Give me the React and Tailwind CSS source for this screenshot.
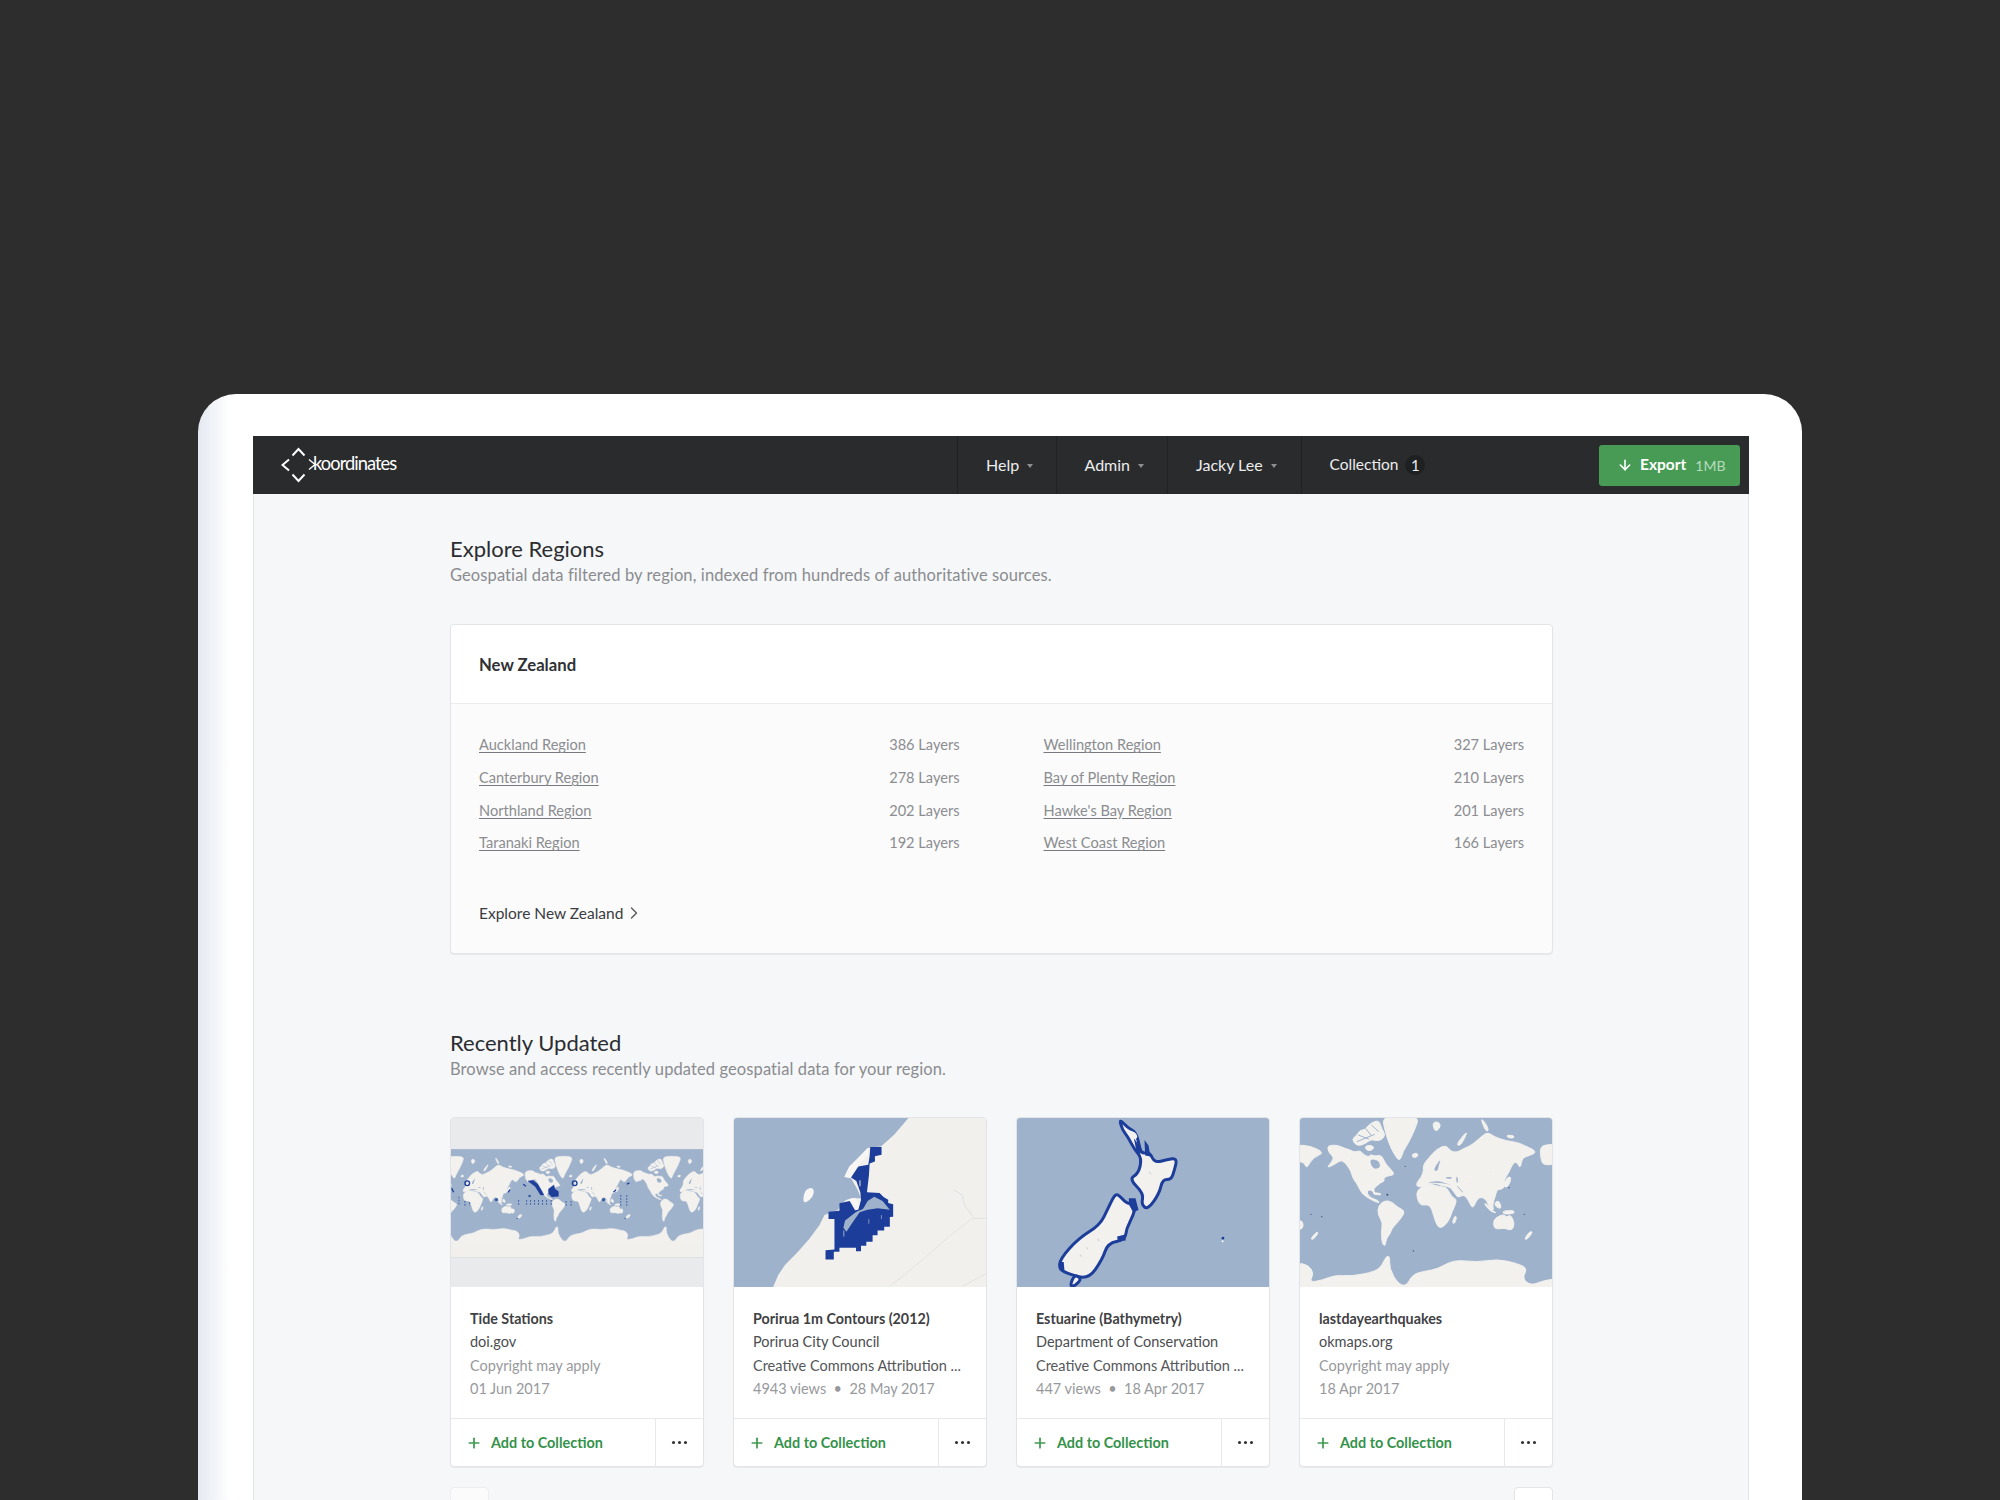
import React from "react";
import { ArrowDown, ChevronRight, Plus } from "lucide-react";

const SEA = "#9fb2cb";
const LAND = "#f2f1ee";
const DEEP = "#1c3d99";

function smooth(pts) {
  const n = pts.length;
  const mid = (a, b) => [(a[0] + b[0]) / 2, (a[1] + b[1]) / 2];
  const s = mid(pts[n - 1], pts[0]);
  let d = `M${s[0]} ${s[1]}`;
  for (let i = 0; i < n; i++) {
    const m = mid(pts[i], pts[(i + 1) % n]);
    d += ` Q${pts[i][0]} ${pts[i][1]} ${m[0]} ${m[1]}`;
  }
  return d + "Z";
}

const WORLD = [
  [[106,94],[122,90],[140,92],[160,100],[178,106],[190,112],[205,106],[218,120],[232,126],[238,118],[250,124],[268,120],[276,132],[284,148],[296,160],[310,178],[296,182],[284,184],[276,192],[280,198],[266,204],[258,212],[246,220],[250,238],[242,226],[230,224],[226,236],[240,250],[256,254],[266,264],[252,260],[232,250],[214,238],[204,222],[196,206],[184,190],[178,168],[166,150],[150,134],[132,146],[104,160],[122,138],[126,126],[112,114]],
  [[260,276],[272,262],[288,256],[306,264],[318,276],[342,288],[332,306],[316,326],[302,340],[296,358],[284,372],[282,394],[272,386],[270,350],[274,322],[260,300]],
  [[272,6],[330,2],[384,6],[372,42],[352,84],[336,108],[326,140],[310,120],[294,88],[282,50]],
  [[180,72],[196,62],[204,46],[222,44],[232,28],[262,14],[270,40],[284,62],[262,80],[240,72],[222,86],[196,94]],
  [[218,94],[240,90],[250,100],[230,110]],
  [[362,118],[378,113],[382,124],[366,129]],
  [[424,22],[444,20],[450,36],[432,52]],
  [[522,56],[530,52],[510,92],[496,90]],
  [[570,10],[582,20],[596,46],[586,50]],
  [[648,60],[672,62],[670,70],[652,68]],
  [[398,168],[396,150],[414,128],[438,102],[466,90],[480,110],[500,112],[520,100],[540,92],[560,76],[590,50],[612,66],[650,78],[680,82],[700,90],[742,110],[718,122],[696,128],[690,162],[680,140],[668,144],[656,172],[640,196],[644,214],[632,224],[620,222],[614,246],[606,268],[610,288],[596,278],[590,258],[576,246],[560,250],[546,284],[532,252],[518,238],[500,250],[488,228],[472,214],[450,212],[438,205],[418,204],[398,214],[378,216],[376,204],[390,188]],
  [[374,234],[392,214],[420,206],[446,216],[468,216],[482,246],[500,254],[484,290],[472,322],[448,342],[434,324],[422,278],[410,268],[386,272]],
  [[608,316],[624,304],[640,298],[650,308],[660,298],[674,326],[664,348],[642,338],[612,344]],
  [[10,442],[50,450],[66,476],[52,502],[90,496],[130,480],[180,484],[250,470],[272,452],[284,424],[296,424],[294,460],[320,506],[346,514],[364,478],[404,468],[440,462],[490,434],[560,442],[620,432],[680,445],[712,460],[696,490],[722,512],[762,496],[810,490],[810,570],[10,570]],
  [[10,88],[60,94],[98,114],[62,128],[44,162],[36,140],[10,140]],
  [[750,96],[772,88],[810,90],[810,145],[760,152],[752,130]],
  [[56,372],[74,350],[80,354],[64,374]],
  [[702,372],[720,348],[728,352],[710,374]],
  [[484,324],[492,302],[498,306],[492,326]],
  [[638,214],[652,184],[664,188],[652,218]],
  [[10,318],[32,316],[34,342],[10,344]],
  [[578,262],[594,272],[606,288],[620,294],[600,290]],
  [[612,262],[626,256],[634,282],[616,276]],
  [[636,288],[672,286],[672,296],[640,298]],
  [[244,232],[270,236],[268,240],[246,238]],
];

const SEAS = [
  [[236,132],[262,136],[268,156],[250,164],[238,150]],
  [[404,204],[440,197],[462,204],[486,212],[470,207],[440,203]],
  [[428,166],[437,148],[450,132],[444,150],[440,170]],
  [[464,186],[484,186],[482,192],[466,191]],
  [[496,184],[501,186],[502,204],[497,204]],
];

function WorldShapes({ seas }) {
  return (
    <g>
      <g fill={LAND} stroke={LAND} strokeWidth="3" strokeLinejoin="round">
        {WORLD.map((p, i) => <path key={i} d={smooth(p)} />)}
      </g>
      {seas && (
        <g>
          <g fill={SEA}>
            {SEAS.map((p, i) => <path key={i} d={smooth(p)} />)}
          </g>
          <g fill="none" stroke={SEA} strokeWidth="3">
            <path d="M200 60 L232 72 M222 40 L240 62 M240 30 L262 50 M196 80 L250 58" />
            <path d="M476 218 L500 250" />
            <path d="M500 214 L516 232" />
            <path d="M410 172 L420 198" strokeWidth="0" />
          </g>
          <g fill="#e4e5e6">
            <circle cx="180" cy="132" r="2" /><circle cx="240" cy="182" r="2" /><circle cx="540" cy="205" r="2" /><circle cx="600" cy="160" r="2" />
          </g>
        </g>
      )}
    </g>
  );
}

function TideMap() {
  return (
    <svg viewBox="18 10 760 505" className="block w-full h-full blur-[0.4px]" preserveAspectRatio="none">
      <rect x="18" y="10" width="760" height="505" fill="#e9eaec" />
      <clipPath id="band"><rect x="18" y="103" width="760" height="324" /></clipPath>
      <g clipPath="url(#band)">
        <rect x="18" y="103" width="760" height="324" fill={SEA} />
        {[-134, 193, 520].map((x) => (
          <g key={x} transform={`translate(${x} 123) scale(0.5)`}><WorldShapes seas /></g>
        ))}
        <rect x="18" y="378" width="760" height="49" fill="#f2f0ec" />
      </g>
      <g fill={DEEP} stroke={DEEP}>
        <path d="M250 198 L265 196 L280 208 L292 228 L298 240 L288 240 L272 215 Z" />
        <path d="M312 222 L328 210 L332 222 L342 230 L342 244 L322 246 L312 236 Z" />
        <circle cx="67" cy="205" r="7" fill="none" strokeWidth="4" />
        <circle cx="391" cy="205" r="7" fill="none" strokeWidth="4" />
        <path d="M508 232 L516 224 M20 220 L26 232 M548 208 L556 204 M236 208 L244 214 M196 224 L190 232" strokeWidth="4" />
      </g>
      <g stroke="#3b5ca8" strokeWidth="3" strokeDasharray="5 4">
        <path d="M222 255 V272 M246 255 V272 M258 255 V272 M270 255 V272 M282 255 V272 M294 255 V272 M306 255 V272 M320 255 V272 M365 258 V274 M380 258 V274 M530 240 V272 M548 240 V272 M42 245 V272 M60 258 V272 M74 262 V272" />
      </g>
      <g fill="#3b5ca8">
        <circle cx="155" cy="254" r="5" /><circle cx="478" cy="254" r="5" /><circle cx="255" cy="243" r="4" /><circle cx="218" cy="310" r="2" /><circle cx="543" cy="310" r="2" />
      </g>
    </svg>
  );
}

function PoriruaMap() {
  return (
    <svg viewBox="27 10 760 505" className="block w-full h-full blur-[0.4px]" preserveAspectRatio="none">
      <rect x="27" y="10" width="760" height="505" fill="#f1f0ed" />
      <path fill={SEA} d="M27 10 L553 10 L510 60 L470 95 L430 100 L410 125 L375 155 L360 185 L380 190 L400 225 L410 250 L380 250 L355 262 L340 285 L300 300 L285 330 L255 370 L220 410 L180 450 L160 480 L145 515 L27 515 Z" />
      <path fill="#f7f6f4" d={smooth([[240,225],[264,216],[270,235],[256,256],[234,266]])} />
      <path fill="#f7f6f4" d="M430 100 L434 118 L400 155 L378 190 L360 186 L375 155 L405 125 Z" />
      <path fill="#f7f6f4" d="M362 256 L392 248 L405 268 L402 288 L388 286 L376 264 Z" />
      <path fill={DEEP} d="M438 97 L472 97 L472 120 L452 124 L452 140 L436 146 L434 180 L428 232 L466 234 L478 246 L492 254 L492 264 L507 268 L507 305 L497 306 L497 335 L480 335 L480 346 L460 346 L460 360 L445 360 L445 380 L426 380 L426 392 L410 392 L410 408 L395 408 L395 398 L345 398 L345 410 L328 410 L328 433 L303 433 L303 405 L330 403 L330 312 L312 312 L312 290 L345 287 L345 265 L376 258 L392 286 L402 284 L410 255 L408 232 L396 198 L380 188 L402 155 L432 150 L436 124 Z" />
      <path fill={SEA} d="M416 282 L430 258 L450 245 L475 258 L497 284 L460 280 L430 284 L406 292 L386 320 L366 350 L357 338 L362 316 L396 290 Z" />
      <g fill="#7f92bd">
        <rect x="356" y="346" width="4" height="18" />
        <rect x="432" y="312" width="3" height="14" />
        <rect x="470" y="300" width="3" height="12" />
        <rect x="404" y="196" width="6" height="18" />
      </g>
      <g fill="none" stroke="#dcdcd9" strokeWidth="2">
        <path d="M495 515 L600 430 L680 360 L745 310 L787 310" />
        <path d="M690 225 L715 240 L722 270 L748 305" stroke="#d3d8de" />
        <path d="M712 515 L787 475" />
      </g>
    </svg>
  );
}

function NzMap() {
  return (
    <svg viewBox="20 10 755 505" className="block w-full h-full blur-[0.4px]" preserveAspectRatio="none">
      <rect x="20" y="10" width="755" height="505" fill={SEA} />
      <g fill={LAND} stroke={DEEP} strokeWidth="9" strokeLinejoin="round">
        <path d={smooth([[326,12],[350,38],[376,52],[386,90],[392,116],[418,112],[432,144],[470,134],[500,130],[492,165],[482,194],[456,194],[446,236],[412,284],[392,268],[400,236],[356,192],[384,176],[394,130],[372,104],[352,66],[336,46]])} />
        <path d={smooth([[322,236],[350,268],[378,262],[368,302],[348,340],[344,374],[292,384],[276,432],[234,492],[176,476],[146,462],[150,430],[204,370],[268,330],[292,282],[310,244]])} />
        <path d={smooth([[178,512],[192,478],[214,490],[194,512]])} />
      </g>
      <g fill={DEEP}>
        <path d="M355 250 L375 250 L384 285 L368 292 L356 270 Z" />
        <path d="M402 76 L414 92 L420 125 L404 122 Z" />
        <path d="M370 70 L384 90 L390 118 L378 110 Z" />
        <path d="M320 364 L344 358 L346 376 L322 378 Z" />
        <path d="M148 440 L160 440 L162 464 L148 466 Z" />
        <circle cx="637" cy="369" r="4" />
      </g>
      <path d={smooth([[350,44],[378,54],[382,74],[358,70]])} fill={LAND} />
      <circle cx="636" cy="378" r="3" fill="#fff" />
      <g stroke="#cfd0cf" strokeWidth="3" fill="none">
        <path d="M228 396 L232 402 M208 418 L214 424 M262 370 L266 378 M416 170 L422 178" />
      </g>
    </svg>
  );
}

function WorldMap() {
  return (
    <svg viewBox="24 9 762 507" className="block w-full h-full blur-[0.4px]" preserveAspectRatio="none">
      <rect x="24" y="9" width="762" height="507" fill={SEA} />
      <WorldShapes seas />
      <g fill="#3b5578">
        <circle cx="288" cy="239" r="3" /><circle cx="342" cy="154" r="2" /><circle cx="57" cy="298" r="2" /><circle cx="90" cy="305" r="2" /><circle cx="656" cy="218" r="2" /><circle cx="702" cy="298" r="2" /><circle cx="367" cy="408" r="2" />
      </g>
    </svg>
  );
}

function NavItem({ label, className }) {
  return (
    <div className={`flex items-center border-l border-[#202123] pl-[28px] h-full text-[16px] text-[#eceded] ${className}`}>
      <span>{label}</span>
      <span className="ml-[8px] mt-[1px] w-0 h-0 border-x-[3.5px] border-x-transparent border-t-[4px] border-t-[#8d8f91]" />
    </div>
  );
}

function Card({ title, org, lic, licDark, meta, map }) {
  return (
    <div className="bg-white border border-[#e2e4e7] rounded-[4px] overflow-hidden shadow-[0_1px_1px_rgba(0,0,0,0.06)] flex flex-col h-[350px]">
      <div className="h-[169px] overflow-hidden">{map}</div>
      <div className="flex-1 pt-[20px] pl-[19px] text-[14.5px] leading-[23.3px]">
        <div className="font-bold text-[#3f4144] text-[14.3px]">{title}</div>
        <div className="text-[#4b4d50]">{org}</div>
        <div className={licDark ? "text-[#55575a] whitespace-nowrap" : "text-[#97999c]"}>{lic}</div>
        <div className="text-[#97999c] whitespace-pre">{meta}</div>
      </div>
      <div className="h-[48px] border-t border-[#e8e9eb] flex items-center">
        <div className="flex-1 flex items-center pl-[15px] text-[14.4px] font-bold text-[#34924a] h-full">
          <Plus size={16} strokeWidth={2.6} className="text-[#3f9a52]" />
          <span className="ml-[9px]">Add to Collection</span>
        </div>
        <div className="w-[48px] h-full border-l border-[#e8e9eb] flex items-center justify-center gap-[2.5px]">
          <span className="w-[3.5px] h-[3.5px] rounded-full bg-[#2c2e30]" />
          <span className="w-[3.5px] h-[3.5px] rounded-full bg-[#2c2e30]" />
          <span className="w-[3.5px] h-[3.5px] rounded-full bg-[#2c2e30]" />
        </div>
      </div>
    </div>
  );
}

function Region({ name, count }) {
  return (
    <div className="flex justify-between items-center h-[32.7px] text-[14.6px] text-[#8b8d90]">
      <a className="underline underline-offset-2 decoration-[#77797c]">{name}</a>
      <span>{count} Layers</span>
    </div>
  );
}

const left = [["Auckland Region", 386], ["Canterbury Region", 278], ["Northland Region", 202], ["Taranaki Region", 192]];
const right = [["Wellington Region", 327], ["Bay of Plenty Region", 210], ["Hawke's Bay Region", 201], ["West Coast Region", 166]];

export default function App() {
  return (
    <div className="h-[1500px] overflow-hidden bg-[#2d2d2d] pt-[394px] font-['Lato','Liberation_Sans',sans-serif]">
      <div className="ml-[198px] w-[1604px] h-[1106px] rounded-t-[38px] bg-[linear-gradient(90deg,#e4e9f1,#ffffff_32px)] pl-[55px] pr-[53px] pt-[42px]">
        <div className="h-full border-x border-[#e3e4e6] bg-[#f6f7f9]">
          <header className="h-[58px] bg-[#2a2b2d] flex items-center -mx-px">
            <div className="w-[704px] flex items-center pl-[28px] shrink-0">
              <svg width="36" height="38" viewBox="0 0 36 38" fill="none" stroke="#ffffff" strokeWidth="2" className="shrink-0">
                <path d="M8 13.5 L1.5 19 L8 24.5" />
                <path d="M11.5 9.5 L17.5 3 L23.5 9.5" />
                <path d="M11.5 28.5 L17.5 35 L23.5 28.5" />
                <path d="M28 13.5 L34 18.5 L28 23.5" strokeWidth="1.4" />
              </svg>
              <span className="ml-[-4px] -mt-[3px] text-[18.3px] leading-none font-normal tracking-[-0.95px] text-white">koordinates</span>
            </div>
            <NavItem label="Help" className="w-[98.5px]" />
            <NavItem label="Admin" className="w-[111.5px]" />
            <NavItem label="Jacky Lee" className="w-[133.5px]" />
            <div className="flex-1 h-full flex items-center border-l border-[#202123] pl-[28px] text-[15.5px] text-[#eceded]">
              <span>Collection</span>
              <span className="ml-[7px] w-[20px] h-[20px] rounded-full bg-[#1f2022] flex items-center justify-center text-[15px]">1</span>
            </div>
            <div className="w-[141px] h-[41px] mr-[9px] rounded-[3px] bg-[#479b55] flex items-center pl-[18px]">
              <ArrowDown size={16} strokeWidth={2.4} className="text-white" />
              <span className="ml-[7px] text-white font-bold text-[15.5px]">Export</span>
              <span className="ml-[9px] text-[#b6dcbd] text-[14px]">1MB</span>
            </div>
          </header>
          <main className="w-[1103px] ml-[196px] pt-[40px]">
            <h1 className="text-[22px] leading-[30px] font-normal text-[#2b2d30]">Explore Regions</h1>
            <p className="-mt-[1px] text-[16.5px] leading-[24px] text-[#8a8c8f] tracking-[0.1px]">Geospatial data filtered by region, indexed from hundreds of authoritative sources.</p>
            <section className="mt-[37px] h-[330px] bg-[#fbfbfc] border border-[#e2e4e7] rounded-[4px] shadow-[0_1px_1px_rgba(0,0,0,0.06)]">
              <div className="h-[79px] bg-white border-b border-[#ebecee] rounded-t-[4px] flex items-center pl-[28px] pt-[3px] text-[16.7px] font-bold text-[#2f3134]">New Zealand</div>
              <div className="px-[28px] pt-[25px]">
                <div className="grid grid-cols-2 gap-x-[84px]">
                  <div>{left.map(([n, c]) => <Region key={n} name={n} count={c} />)}</div>
                  <div>{right.map(([n, c]) => <Region key={n} name={n} count={c} />)}</div>
                </div>
                <div className="mt-[41px] flex items-center text-[15.5px] leading-[24px] text-[#3a3c3f]">
                  Explore New Zealand
                  <ChevronRight size={20} strokeWidth={1.6} className="ml-[1px] text-[#55575a]" />
                </div>
              </div>
            </section>
            <h2 className="mt-[74px] text-[22px] leading-[30px] font-normal text-[#2b2d30]">Recently Updated</h2>
            <p className="-mt-[1px] text-[16.5px] leading-[24px] text-[#8a8c8f] tracking-[0.1px]">Browse and access recently updated geospatial data for your region.</p>
            <div className="mt-[36px] grid grid-cols-4 gap-x-[29px]">
              <Card title="Tide Stations" org="doi.gov" lic="Copyright may apply" meta="01 Jun 2017" map={<TideMap />} />
              <Card title="Porirua 1m Contours (2012)" org="Porirua City Council" lic="Creative Commons Attribution ..." licDark meta="4943 views  •  28 May 2017" map={<PoriruaMap />} />
              <Card title="Estuarine (Bathymetry)" org="Department of Conservation" lic="Creative Commons Attribution ..." licDark meta="447 views  •  18 Apr 2017" map={<NzMap />} />
              <Card title="lastdayearthquakes" org="okmaps.org" lic="Copyright may apply" meta="18 Apr 2017" map={<WorldMap />} />
            </div>
            <div className="mt-[20px] flex justify-between">
              <div className="w-[39px] h-[40px] bg-[#fbfbfc] border border-[#eceef0] rounded-[4px]" />
              <div className="w-[39px] h-[40px] bg-white border border-[#e2e4e7] rounded-[4px]" />
            </div>
          </main>
        </div>
      </div>
    </div>
  );
}
